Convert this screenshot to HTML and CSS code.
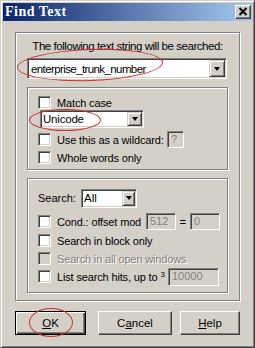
FILE: index.html
```
<!DOCTYPE html>
<html>
<head>
<meta charset="utf-8">
<link rel="stylesheet" href="styles.css">
</head>
<body>
<div class="window">
  <div class="titlebar">
    <span class="title">Find Text</span>
    <span class="close"><svg width="10" height="9" viewBox="0 0 10 9"><path d="M1.5 1 L8.5 8 M8.5 1 L1.5 8" stroke="#000" stroke-width="2" fill="none"/></svg></span>
  </div>
  <div class="content">
    <div class="group outer">
      <div class="prompt">The following text string will be searched:</div>
      <div class="combo wide">
        <span class="combo-text">enterprise_trunk_number</span>
        <span class="drop"><i class="arrow"></i></span>
      </div>
      <div class="group inner g1">
        <div class="row r13">
          <span class="check"></span><span class="label">Match case</span>
        </div>
        <div class="combo enc">
          <span class="combo-text">Unicode</span>
          <span class="drop"><i class="arrow"></i></span>
        </div>
        <div class="row r17 mt3">
          <span class="check"></span><span class="label w-wild">Use this as a wildcard:</span>
          <span class="field dis q">?</span>
        </div>
        <div class="row r13 mt3">
          <span class="check"></span><span class="label">Whole words only</span>
        </div>
      </div>
      <div class="group inner g2">
        <div class="row r20">
          <span class="slabel">Search:</span>
          <div class="combo all">
            <span class="combo-text">All</span>
            <span class="drop"><i class="arrow"></i></span>
          </div>
        </div>
        <div class="row r17 mt5">
          <span class="check"></span><span class="label w-cond">Cond.: offset mod</span>
          <span class="field dis n30">512</span>
          <span class="eq">=</span>
          <span class="field dis n30">0</span>
        </div>
        <div class="row r17 mt2">
          <span class="check"></span><span class="label">Search in block only</span>
        </div>
        <div class="row r17 mt1">
          <span class="check dis"></span><span class="label disabled">Search in all open windows</span>
        </div>
        <div class="row r17 mt1">
          <span class="check"></span><span class="label w-list">List search hits, up to <sup>3</sup></span>
          <span class="field dis n51">10000</span>
        </div>
      </div>
    </div>
    <div class="buttons">
      <button class="btn default ok"><u>O</u>K</button>
      <button class="btn cancel">C<u>a</u>ncel</button>
      <button class="btn help"><u>H</u>elp</button>
    </div>
  </div>
  <div class="mark m1"></div>
  <div class="mark m2"></div>
  <div class="mark m3"></div>
</div>
</body>
</html>
```
FILE: styles.css
```
html, body { margin: 0; padding: 0; background: #d4d0c8; }
body { font-family: "Liberation Sans", Arial, sans-serif; font-size: 11px; color: #000; }

.window {
  position: relative;
  width: 255px; height: 348px; box-sizing: border-box;
  background: #d4d0c8;
  border: 1px solid; border-color: #d4d0c8 #404040 #404040 #d4d0c8;
  box-shadow: inset 1px 1px 0 #fff, inset -1px -1px 0 #808080;
  padding: 2px;
  display: flex; flex-direction: column;
  overflow: hidden;
}

.titlebar {
  height: 18px; flex: none;
  display: flex; align-items: center;
  background: linear-gradient(to right, #0a246a, #a6caf0);
}
.title {
  margin-left: 2px;
  color: #fff; font-family: "Liberation Serif", "Times New Roman", serif;
  font-weight: bold; font-size: 14px; letter-spacing: 0.5px;
}
.close {
  margin-left: auto; margin-right: 1px;
  width: 16px; height: 14px; box-sizing: border-box;
  background: #d4d0c8;
  border: 1px solid; border-color: #fff #404040 #404040 #fff;
  box-shadow: inset -1px -1px 0 #808080;
  display: flex; align-items: center; justify-content: center;
}
.close svg { display: block; margin: 0 1px 1px 0; }

.content { flex: 1; display: flex; flex-direction: column; padding: 11px 12px 0 12px; }

.group {
  box-sizing: border-box;
  border: 1px solid #808080;
  box-shadow: inset 1px 1px 0 #fff, 1px 1px 0 #fff;
}
.outer { height: 269px; width: 225px; padding: 7px 11px 0 11px; display: flex; flex-direction: column; }
.prompt { height: 13px; line-height: 13px; text-align: center; white-space: nowrap; font-size: 11.5px; letter-spacing: -0.45px; }

.combo {
  position: relative; box-sizing: border-box; background: #fff;
  border: 1px solid; border-color: #808080 #fff #fff #808080;
  box-shadow: inset 1px 1px 0 #404040, inset -1px -1px 0 #d4d0c8;
  display: flex; align-items: center;
}
.combo-text { padding-left: 3px; flex: 1; white-space: nowrap; font-size: 11.5px; }
.drop {
  box-sizing: border-box; align-self: stretch; margin: 1px;
  width: 16px; background: #d4d0c8;
  border: 1px solid; border-color: #d4d0c8 #404040 #404040 #d4d0c8;
  box-shadow: inset 1px 1px 0 #fff, inset -1px -1px 0 #808080;
  display: flex; align-items: center; justify-content: center;
}
.arrow { display: block; width: 0; height: 0; border-left: 3.5px solid transparent; border-right: 3.5px solid transparent; border-top: 4px solid #000; }
.wide { margin-top: 5px; height: 21px; width: 200px; }
.wide .combo-text { font-size: 11.5px; letter-spacing: -0.6px; padding-left: 3px; }

.inner { width: 201px; padding-left: 10px; display: flex; flex-direction: column; }
.g1 { margin-top: 8px; height: 83px; padding-top: 8px; }
.g2 { margin-top: 8px; height: 115px; padding-top: 9px; }

.row { display: flex; align-items: center; white-space: nowrap; }
.r13 { height: 13px; }
.r17 { height: 17px; }
.r20 { height: 20px; }
.mt1 { margin-top: 1px; } .mt2 { margin-top: 2px; } .mt3 { margin-top: 3px; } .mt5 { margin-top: 5px; }

.check {
  flex: none; width: 13px; height: 13px; box-sizing: border-box; background: #fff;
  border: 1px solid; border-color: #808080 #fff #fff #808080;
  box-shadow: inset 1px 1px 0 #404040, inset -1px -1px 0 #d4d0c8;
}
.check.dis { background: #d4d0c8; }
.label { margin-left: 6px; font-size: 11px; letter-spacing: -0.15px; }
.label sup { font-size: 8px; vertical-align: 4px; line-height: 0; }
.disabled { color: #808080; text-shadow: 1px 1px 0 #fff; }
.w-wild { width: 110px; }
.w-cond { width: 89px; }
.w-list { width: 111px; }

.enc { margin: 1px 0 0 2px; width: 104px; height: 18px; }
.enc .combo-text { font-size: 11.5px; letter-spacing: -0.2px; padding-left: 2px; }
.enc .drop { width: 15px; }

.slabel { width: 43px; font-size: 11px; }
.all { width: 56px; height: 19px; }
.all .combo-text { font-size: 11.5px; padding-left: 2px; }
.all .drop { width: 13px; }

.field {
  box-sizing: border-box; height: 17px; line-height: 13px;
  border: 1px solid; border-color: #808080 #fff #fff #808080;
  box-shadow: inset 1px 1px 0 #404040, inset -1px -1px 0 #d4d0c8;
  padding: 1px 3px; font-size: 11px; white-space: nowrap;
}
.field.dis { background: #d4d0c8; color: #808080; }
.q { width: 17px; }
.n30 { width: 30px; }
.n51 { width: 51px; height: 18px; }
.eq { width: 14px; text-align: center; font-size: 11px; }

.buttons { display: flex; margin-top: 10px; }
.btn {
  height: 24px; box-sizing: border-box; padding: 0; margin: 0;
  background: #d4d0c8; font-family: "Liberation Sans", Arial, sans-serif; font-size: 11.5px; color: #000;
  border: 1px solid; border-color: #fff #404040 #404040 #fff;
  box-shadow: inset -1px -1px 0 #808080;
}
.btn.default {
  border-color: #000;
  box-shadow: inset 1px 1px 0 #fff, inset -1px -1px 0 #404040, inset -2px -2px 0 #808080;
}
.ok { width: 71px; }
.cancel { width: 74px; margin-left: 12px; }
.help { width: 60px; margin-left: 8px; }

.mark { position: absolute; border: 1px solid #c8302c; border-radius: 50%; }
.m1 { left: 16px; top: 48px; width: 144px; height: 30px; transform: rotate(-2deg); }
.m2 { left: 28px; top: 108px; width: 70px; height: 20px; }
.m3 { left: 28px; top: 307px; width: 42px; height: 27px; }
```
